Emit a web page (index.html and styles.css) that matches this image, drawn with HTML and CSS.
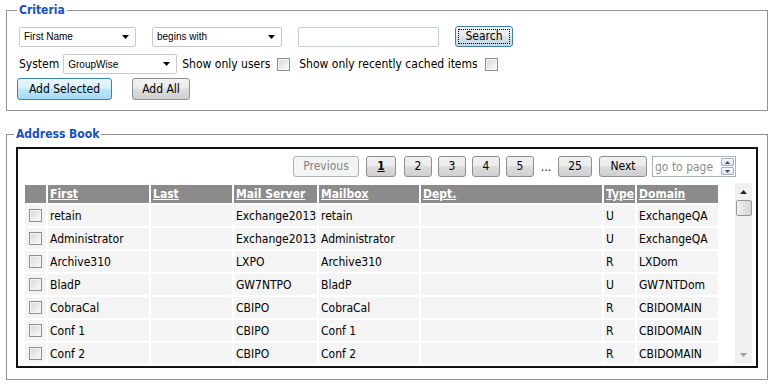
FILE: index.html
```html
<!DOCTYPE html>
<html>
<head>
  <title>Address Book</title>
  <meta name="viewport" content="width=device-width, initial-scale=1.0">
  <link rel="stylesheet" href="styles.css">
</head>
<body>

<fieldset class="panel criteria">
  <legend>Criteria</legend>

  <div class="row row-search">
    <div class="select select-field">
      <span>First Name</span>
      <svg class="caret" width="7" height="4" viewBox="0 0 7 4"><path d="M0 0H7L3.5 4Z"/></svg>
    </div>
    <div class="select select-op">
      <span>begins with</span>
      <svg class="caret" width="7" height="4" viewBox="0 0 7 4"><path d="M0 0H7L3.5 4Z"/></svg>
    </div>
    <input class="text-input" type="text">
    <button class="btn btn-focus"><span class="focus-ring">Search</span></button>
  </div>

  <div class="row row-filter">
    <span class="label">System</span>
    <div class="select select-system">
      <span>GroupWise</span>
      <svg class="caret" width="7" height="4" viewBox="0 0 7 4"><path d="M0 0H7L3.5 4Z"/></svg>
    </div>
    <span class="label opt-users">Show only users</span>
    <input class="check" type="checkbox">
    <span class="label opt-cached">Show only recently cached items</span>
    <input class="check" type="checkbox">
  </div>

  <div class="row row-actions">
    <button class="btn btn-blue">Add Selected</button>
    <button class="btn btn-all">Add All</button>
  </div>
</fieldset>

<fieldset class="panel book">
  <legend>Address Book</legend>

  <div class="book-box">
    <div class="pager">
      <button class="btn page-btn prev">Previous</button>
      <button class="btn page-btn current">1</button>
      <button class="btn page-btn num">2</button>
      <button class="btn page-btn num">3</button>
      <button class="btn page-btn num">4</button>
      <button class="btn page-btn num">5</button>
      <span class="dots">...</span>
      <button class="btn page-btn last">25</button>
      <button class="btn page-btn next">Next</button>
      <div class="goto">
        <input class="goto-input" type="text" placeholder="go to page">
        <div class="spin">
          <span class="spin-btn"><svg width="5" height="3" viewBox="0 0 5 3"><path d="M0 3H5L2.5 0Z"/></svg></span>
          <span class="spin-btn"><svg width="5" height="3" viewBox="0 0 5 3"><path d="M0 0H5L2.5 3Z"/></svg></span>
        </div>
      </div>
    </div>

    <div class="scroll-area">
      <div class="table-wrap">
        <table class="grid">
          <colgroup>
            <col class="c-check"><col class="c-first"><col class="c-last"><col class="c-server">
            <col class="c-mailbox"><col class="c-dept"><col class="c-type"><col class="c-domain">
          </colgroup>
          <thead>
            <tr>
              <th></th>
              <th><a href="#">First</a></th>
              <th><a href="#">Last</a></th>
              <th><a href="#">Mail Server</a></th>
              <th><a href="#">Mailbox</a></th>
              <th><a href="#">Dept.</a></th>
              <th><a href="#">Type</a></th>
              <th><a href="#">Domain</a></th>
            </tr>
          </thead>
          <tbody>
            <tr><td class="cb"><input class="check" type="checkbox"></td><td>retain</td><td></td><td>Exchange2013</td><td>retain</td><td></td><td>U</td><td>ExchangeQA</td></tr>
            <tr><td class="cb"><input class="check" type="checkbox"></td><td>Administrator</td><td></td><td>Exchange2013</td><td>Administrator</td><td></td><td>U</td><td>ExchangeQA</td></tr>
            <tr><td class="cb"><input class="check" type="checkbox"></td><td>Archive310</td><td></td><td>LXPO</td><td>Archive310</td><td></td><td>R</td><td>LXDom</td></tr>
            <tr><td class="cb"><input class="check" type="checkbox"></td><td>BladP</td><td></td><td>GW7NTPO</td><td>BladP</td><td></td><td>U</td><td>GW7NTDom</td></tr>
            <tr><td class="cb"><input class="check" type="checkbox"></td><td>CobraCal</td><td></td><td>CBIPO</td><td>CobraCal</td><td></td><td>R</td><td>CBIDOMAIN</td></tr>
            <tr><td class="cb"><input class="check" type="checkbox"></td><td>Conf 1</td><td></td><td>CBIPO</td><td>Conf 1</td><td></td><td>R</td><td>CBIDOMAIN</td></tr>
            <tr><td class="cb"><input class="check" type="checkbox"></td><td>Conf 2</td><td></td><td>CBIPO</td><td>Conf 2</td><td></td><td>R</td><td>CBIDOMAIN</td></tr>
          </tbody>
        </table>
      </div>

      <div class="scrollbar">
        <span class="sb-arrow"><svg width="7" height="4" viewBox="0 0 7 4"><path d="M0 4H7L3.5 0Z"/></svg></span>
        <span class="sb-thumb"></span>
        <span class="sb-track"></span>
        <span class="sb-arrow sb-down"><svg width="7" height="4" viewBox="0 0 7 4"><path d="M0 0H7L3.5 4Z"/></svg></span>
      </div>
    </div>
  </div>
</fieldset>

</body>
</html>
```

FILE: styles.css
```css
* {
  box-sizing: border-box;
}

body {
  margin: 0;
  font-family: "DejaVu Sans", Verdana, sans-serif;
  font-stretch: condensed;
  font-size: 12px;
  color: #000;
  background: #fff;
}

/* fieldsets */
.panel {
  margin: 0 6px;
  border: 1px solid #939393;
  min-width: 0;
}

.panel legend {
  margin-left: -2px;
  padding: 0 2px;
  font-weight: bold;
  font-size: 12px;
  line-height: 16px;
  color: #1550c8;
}

.criteria {
  margin-top: 2px;
  padding: 8px 12px 10px 12px;
}

.book {
  margin-top: 15px;
  padding: 5px 9px 11px 9px;
}

/* criteria rows */
.row {
  display: flex;
  align-items: center;
}

.row-search {
  height: 21px;
  gap: 16px;
}

.row-filter {
  margin-top: 7px;
  height: 20px;
}

.row-actions {
  margin-top: 4px;
  height: 22px;
  margin-left: -2px;
}

.select {
  height: 20px;
  display: flex;
  align-items: center;
  justify-content: space-between;
  padding: 0 6px 0 4px;
  border: 1px solid #c9c9c9;
  border-radius: 2px;
  background: #fff;
  font-family: "Liberation Sans", Arial, sans-serif;
  font-stretch: normal;
  font-size: 10px;
}

.caret {
  fill: #000;
}

.select-field { width: 117px; }
.select-op { width: 130px; }
.select-system { width: 114px; margin-left: 4px; }

.text-input {
  width: 141px;
  height: 20px;
  border: 1px solid #c6ccd3;
  border-radius: 2px;
  outline: none;
  margin: 0;
}

.label {
  white-space: nowrap;
}

.opt-users { margin-left: 5px; }
.opt-cached { margin-left: 9px; }

.row-filter .check {
  margin-left: 7px;
}

.check {
  appearance: none;
  -webkit-appearance: none;
  width: 13px;
  height: 13px;
  margin: 0 0 0 5px;
  border: 1px solid #8f8f8f;
  background: linear-gradient(135deg, #d6d6d6, #f4f4f4 80%);
  box-shadow: inset 0 0 0 1px #f4f4f4;
}

/* buttons */
.btn {
  height: 21px;
  padding: 0 9px;
  border: 1px solid #8e8f8f;
  border-radius: 3px;
  background: linear-gradient(#f2f2f2 0%, #ebebeb 45%, #dddddd 50%, #cfcfcf 100%);
  font-family: inherit;
  font-stretch: condensed;
  font-size: 12px;
  color: #000;
  line-height: 19px;
}

.btn-focus {
  width: 58px;
  padding: 2px;
  border-color: #3c7fb1;
  background: linear-gradient(#f2f2f2 0%, #e6eef3 45%, #d7e2ea 50%, #cbd8e2 100%);
}

.focus-ring {
  display: block;
  height: 15px;
  line-height: 13px;
  border: 1px dotted #000;
}

.btn-blue {
  width: 95px;
  height: 22px;
  border-color: #3c7fb1;
  background: linear-gradient(#eaf6fd 0%, #d9f0fc 45%, #bee6fd 50%, #a7d9f5 100%);
}

.btn-all {
  width: 58px;
  height: 22px;
  margin-left: 20px;
}

/* address book box */
.book-box {
  border: 2px solid #111;
  padding: 7px 4px 3px 5px;
}

.pager {
  display: flex;
  justify-content: flex-end;
  align-items: center;
  gap: 6px;
  height: 21px;
  margin-right: 16px;
}

.page-btn {
  padding: 0;
  text-align: center;
}

.page-btn.prev {
  width: 66px;
  margin-right: 1px;
  border-color: #adb2b5;
  background: #f4f4f4;
  color: #838383;
}

.page-btn.current {
  width: 30px;
  margin-right: 2px;
  font-weight: bold;
  text-decoration: underline;
}

.page-btn.num {
  width: 28px;
}

.page-btn.last {
  width: 34px;
}

.page-btn.next {
  width: 48px;
  margin-left: 1px;
}

.dots {
  width: 14px;
  margin: 0 -1px;
  text-align: center;
}

.goto {
  display: flex;
  align-items: center;
  width: 84px;
  height: 21px;
  margin-left: -1px;
  border: 1px solid #a9b1bb;
  background: #fff;
}

.goto-input {
  width: 66px;
  height: 19px;
  border: none;
  outline: none;
  padding: 0 2px;
  font-family: inherit;
  font-stretch: condensed;
  font-size: 12px;
}

.goto-input::placeholder {
  color: #8d8d8d;
}

.spin {
  display: flex;
  flex-direction: column;
  margin-left: auto;
  margin-right: 1px;
  gap: 1px;
}

.spin-btn {
  width: 13px;
  height: 8px;
  display: flex;
  align-items: center;
  justify-content: center;
  border: 1px solid #a4b0c0;
  border-radius: 1px;
  background: linear-gradient(#f4f7fa, #dbe3ec);
  fill: #3b4a5e;
}

.scroll-area {
  display: flex;
  margin-top: 6px;
  height: 180px;
}

.table-wrap {
  flex: 1;
  overflow: hidden;
}

.grid {
  table-layout: fixed;
  width: 697px;
  border-collapse: separate;
  border-spacing: 2px;
}

.c-check { width: 21px; }
.c-first { width: 101px; }
.c-last { width: 81px; }
.c-server { width: 83px; }
.c-mailbox { width: 100px; }
.c-dept { width: 181px; }
.c-type { width: 31px; }
.c-domain { width: 81px; }

.grid th {
  height: 18px;
  padding: 0 1px 0 2px;
  background: #8b8b8b;
  text-align: left;
  font-weight: bold;
  white-space: nowrap;
  overflow: hidden;
}

.grid th a {
  color: #fff;
  text-decoration: underline;
}

.grid td {
  height: 21px;
  padding: 0 0 0 2px;
  background: #f4f4f4;
  white-space: nowrap;
  overflow: hidden;
}

.grid td.cb {
  padding: 0;
}

.grid td.cb .check {
  display: block;
  margin: 0 0 0 4px;
}

/* fake scrollbar */
.scrollbar {
  width: 17px;
  display: flex;
  flex-direction: column;
  background: #f0f0f0;
}

.sb-arrow {
  height: 17px;
  display: flex;
  align-items: center;
  justify-content: center;
  fill: #222;
}

.sb-down {
  fill: #9c9c9c;
}

.sb-thumb {
  height: 16px;
  margin: 0 0 0 1px;
  width: 16px;
  border: 1px solid #979797;
  border-radius: 2px;
  background: linear-gradient(90deg, #f3f3f3, #e2e2e2 50%, #d6d6d6);
}

.sb-track {
  flex: 1;
}
```
